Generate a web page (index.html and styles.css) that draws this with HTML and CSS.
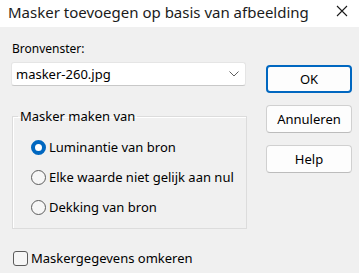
FILE: index.html
```html
<!DOCTYPE html>
<html lang="nl">
<head>
    <meta charset="UTF-8">
    <title>Masker toevoegen op basis van afbeelding</title>
    <link rel="stylesheet" href="styles.css">
</head>
<body>
    <div class="dialog">
        <div class="title-bar">
            <span class="title">Masker toevoegen op basis van afbeelding</span>
            <svg class="close" width="12" height="12" viewBox="0 0 12 12">
                <path d="M1 1 L11 11 M11 1 L1 11" stroke="#1a1a1a" stroke-width="1.1" fill="none"/>
            </svg>
        </div>

        <div class="content">
            <div class="left-col">
                <label class="field-label">Bronvenster:</label>
                <div class="combo">
                    <span>masker-260.jpg</span>
                    <svg width="10" height="6" viewBox="0 0 10 6">
                        <path d="M0.5 0.5 L5 5 L9.5 0.5" stroke="#5f5f5f" stroke-width="1" fill="none"/>
                    </svg>
                </div>

                <fieldset class="group">
                    <legend>Masker maken van</legend>
                    <div class="radio-row">
                        <span class="radio checked"></span>
                        <span>Luminantie van bron</span>
                    </div>
                    <div class="radio-row">
                        <span class="radio"></span>
                        <span>Elke waarde niet gelijk aan nul</span>
                    </div>
                    <div class="radio-row">
                        <span class="radio"></span>
                        <span>Dekking van bron</span>
                    </div>
                </fieldset>

                <div class="check-row">
                    <span class="checkbox"></span>
                    <span>Maskergegevens omkeren</span>
                </div>
            </div>

            <div class="right-col">
                <button class="btn btn-default">OK</button>
                <button class="btn">Annuleren</button>
                <button class="btn">Help</button>
            </div>
        </div>
    </div>
</body>
</html>
```

FILE: styles.css
```css
body {
    margin: 0;
    padding: 0;
    background: #f0f0f0;
    font-family: 'Noto Sans', sans-serif;
    font-size: 12px;
    color: #000;
}

.dialog {
    width: 359px;
    height: 273px;
    overflow: hidden;
}

.title-bar {
    height: 27px;
    background: #fff;
    display: flex;
    align-items: center;
    justify-content: space-between;
    padding: 0 11px 0 8px;
}

.title {
    font-size: 15px;
    color: #1b1b1b;
    margin-top: -4px;
}

.close {
    margin-top: -6px;
}

.content {
    display: flex;
    padding: 14px 0 0 11px;
    gap: 19px;
}

.left-col {
    width: 236px;
    display: flex;
    flex-direction: column;
}

.field-label {
    line-height: 16px;
    padding-left: 1px;
}

.combo {
    margin-top: 5px;
    width: 235px;
    height: 24px;
    box-sizing: border-box;
    background: #fff;
    border: 1px solid #e5e5e5;
    border-bottom-color: #c8c8c8;
    border-radius: 3px;
    display: flex;
    align-items: center;
    justify-content: space-between;
    padding: 0 6px 0 4px;
    font-size: 13px;
}

.group {
    margin: 22px 0 0 1px;
    padding: 8px 0 6px 0;
    border: 1px solid #dcdcdc;
    box-shadow: inset 1px 1px 0 #fff;
    min-width: 0;
}

.group legend {
    padding: 0 2px;
    margin-left: 5px;
    line-height: 16px;
    font-size: 13px;
}

.radio-row,
.check-row {
    height: 30px;
    display: flex;
    align-items: center;
    gap: 3px;
    font-size: 13px;
}

.radio-row {
    padding-left: 18px;
}

.radio {
    width: 15px;
    height: 15px;
    box-sizing: border-box;
    border-radius: 50%;
    border: 1px solid #5c5c5c;
    background: #f6f6f6;
}

.radio.checked {
    border: 4px solid #0067c0;
    background: #fff;
}

.check-row {
    margin-top: 14px;
    padding-left: 2px;
}

.checkbox {
    width: 15px;
    height: 15px;
    box-sizing: border-box;
    border: 1px solid #5c5c5c;
    border-radius: 3px;
    background: #f6f6f6;
}

.right-col {
    width: 86px;
    display: flex;
    flex-direction: column;
    gap: 12px;
    padding-top: 24px;
}

.btn {
    height: 28px;
    background: #fdfdfd;
    border: 1px solid #d0d0d0;
    border-bottom-color: #bcbcbc;
    border-radius: 4px;
    font-family: 'Noto Sans', sans-serif;
    font-size: 13px;
    color: #000;
    padding: 0;
}

.btn-default {
    border: 2px solid #0067c0;
}
```
